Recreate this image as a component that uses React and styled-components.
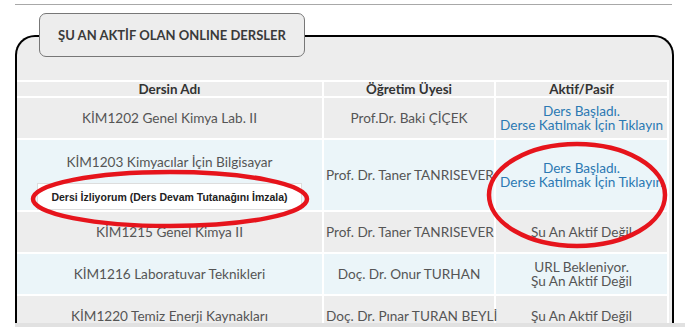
import React from 'react'
import styled, { createGlobalStyle } from 'styled-components'

const GlobalStyle = createGlobalStyle`
  html, body {
    margin: 0;
    padding: 0;
    background: #fff;
    overflow: hidden;
  }
  body {
    font-family: Lato, "Open Sans", sans-serif;
    color: #555;
  }
`

// --- Styled Components --- //
const Page = styled.div`
  position: relative;
  width: 685px;
  height: 331px;
`

const Viewport = styled.div`
  height: 323px;
  overflow: hidden;
  padding-left: 15px;
`

const TopRule = styled.div`
  width: 657px;
  margin-top: 4px;
  border-top: 1px solid #a8a8a8;
`

const Panel = styled.div`
  width: 653px;
  margin-top: 30px;
  padding: 0 2px 0 0;
  border: 2px solid #000;
  border-bottom: none;
  border-radius: 20px 20px 0 0;
  background: #ededed;
`

const Tab = styled.div`
  width: 264px;
  height: 42px;
  margin: -24px 0 23px 22px;
  display: flex;
  align-items: center;
  justify-content: center;
  border: 1px solid #777;
  border-radius: 7px;
  background: #ededed;
  font-size: 13px;
  font-weight: 700;
  color: #3a3a3a;
`

const Table = styled.table`
  width: 651px;
  border-collapse: collapse;
  table-layout: fixed;
  font-size: 13.6px;
`

const Th = styled.th`
  height: 14px;
  padding: 0;
  border: 2px solid #fff;
  border-left: ${p => (p.$first ? 'none' : '2px solid #fff')};
  font-size: 13.4px;
  font-weight: 700;
  color: #333;
  line-height: 14px;
`

const Row = styled.tr`
  background: ${p => (p.$alt ? '#ebf5f9' : '#ededed')};
`

const Td = styled.td`
  height: 40px;
  padding: 0 2px;
  border: 2px solid #fff;
  border-left: ${p => (p.$first ? 'none' : '2px solid #fff')};
  text-align: center;
  vertical-align: middle;
  line-height: 16px;
  white-space: nowrap;
  overflow: visible;
`

const CourseCell = styled(Td)`
  vertical-align: top;
  padding: 14px 2px 0;
`

const CourseTitle = styled.div`
  line-height: 16px;
`

const SignButton = styled.div`
  width: 263px;
  height: 25px;
  margin: 13px auto 0;
  display: flex;
  align-items: center;
  justify-content: center;
  background: #fff;
  border: 1px solid #ddd;
  font-family: "Liberation Sans", Arial, sans-serif;
  font-size: 10.5px;
  font-weight: 700;
  color: #222;
`

const StatusLine = styled.div`
  color: ${p => (p.$link ? '#2b79b3' : '#555')};
  line-height: 16px;
  margin-top: ${p => (p.$next ? '-2px' : '0')};
`

const ScrollTrack = styled.div`
  height: 4px;
  margin-left: 15px;
  background: #e1e1e1;
`

const Marks = styled.svg`
  position: absolute;
  inset: 0;
  pointer-events: none;
`

const courses = [
  { name: 'KİM1202 Genel Kimya Lab. II', teacher: 'Prof.Dr. Baki ÇİÇEK', status: ['Ders Başladı.', 'Derse Katılmak İçin Tıklayın'], link: true },
  { name: 'KİM1203 Kimyacılar İçin Bilgisayar', teacher: 'Prof. Dr. Taner TANRISEVER', status: ['Ders Başladı.', 'Derse Katılmak İçin Tıklayın'], link: true, sign: true },
  { name: 'KİM1215 Genel Kimya II', teacher: 'Prof. Dr. Taner TANRISEVER', status: ['Şu An Aktif Değil'] },
  { name: 'KİM1216 Laboratuvar Teknikleri', teacher: 'Doç. Dr. Onur TURHAN', status: ['URL Bekleniyor.', 'Şu An Aktif Değil'] },
  { name: 'KİM1220 Temiz Enerji Kaynakları', teacher: 'Doç. Dr. Pınar TURAN BEYLİ', status: ['Şu An Aktif Değil'] }
]

// --- Component --- //
const App = () => {
  return (
    <Page>
      <GlobalStyle />
      <Viewport>
        <TopRule />
        <Panel>
          <Tab>ŞU AN AKTİF OLAN ONLINE DERSLER</Tab>
          <Table>
            <colgroup>
              <col style={{ width: 306 }} />
              <col style={{ width: 172 }} />
              <col style={{ width: 173 }} />
            </colgroup>
            <thead>
              <Row>
                <Th $first>Dersin Adı</Th>
                <Th>Öğretim Üyesi</Th>
                <Th>Aktif/Pasif</Th>
              </Row>
            </thead>
            <tbody>
              {courses.map((c, i) => (
                <Row key={c.name} $alt={i % 2 === 1}>
                  {c.sign ? (
                    <CourseCell $first>
                      <CourseTitle>{c.name}</CourseTitle>
                      <SignButton>Dersi İzliyorum (Ders Devam Tutanağını İmzala)</SignButton>
                    </CourseCell>
                  ) : (
                    <Td $first>{c.name}</Td>
                  )}
                  <Td>{c.teacher}</Td>
                  <Td>
                    {c.status.map((s, j) => (
                      <StatusLine key={s} $link={c.link} $next={j > 0}>{s}</StatusLine>
                    ))}
                  </Td>
                </Row>
              ))}
            </tbody>
          </Table>
        </Panel>
      </Viewport>
      <ScrollTrack />
      <Marks width="685" height="331">
        <ellipse cx="170" cy="199" rx="137" ry="27" fill="none" stroke="#e6141c" strokeWidth="4.5" />
        <ellipse cx="577" cy="195" rx="88" ry="51" fill="none" stroke="#e6141c" strokeWidth="4.5" />
      </Marks>
    </Page>
  )
}

export default App
